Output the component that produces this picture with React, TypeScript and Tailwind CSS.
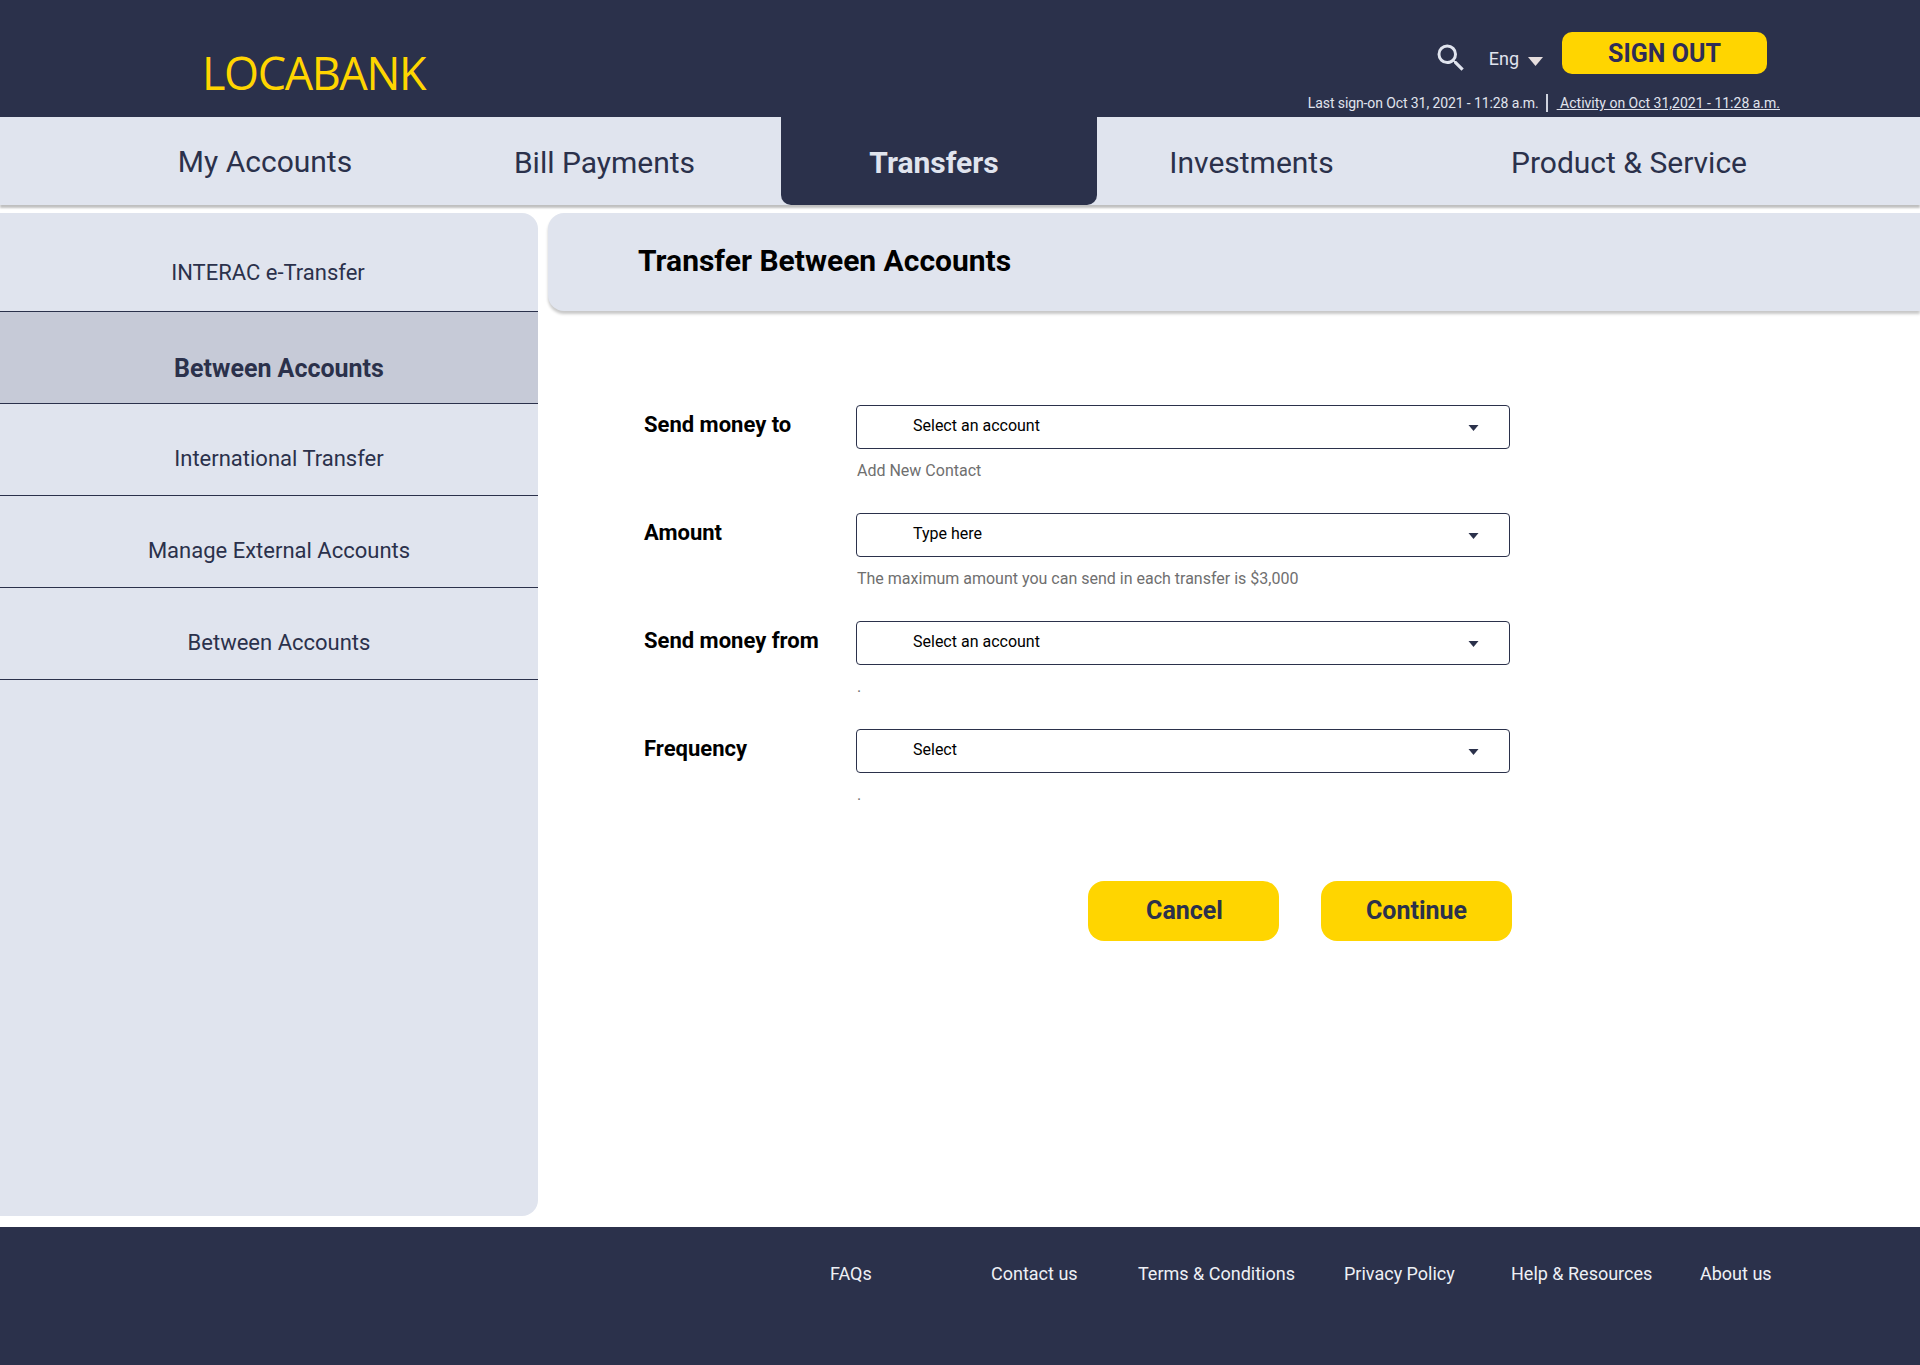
import { MdSearch } from "react-icons/md";

const navItems = [
    { label: "My Accounts", width: "ml-[100px] w-[330px]" },
    { label: "Bill Payments", width: "w-[351px] pt-[2px] pr-[2px]" },
    { label: "Transfers", width: "w-[316px] pt-[2px] pr-[10px]", active: true },
    { label: "Investments", width: "w-[306px] pt-[2px] pl-[3px]" },
    { label: "Product & Service", width: "w-[450px] pt-[2px] pl-[2px]" },
];

const sideItems = [
    { label: "INTERAC e-Transfer", height: "h-[99px] pt-[21px] pr-[2px]" },
    { label: "Between Accounts", height: "h-[92px] pt-[22px] pl-[20px]", active: true },
    { label: "International Transfer", height: "h-[92px] pt-[18px] pl-[20px]" },
    { label: "Manage External Accounts", height: "h-[92px] pt-[18px] pl-[20px]" },
    { label: "Between Accounts", height: "h-[92px] pt-[18px] pl-[20px]" },
];

const fields = [
    { label: "Send money to", value: "Select an account", help: "Add New Contact" },
    { label: "Amount", value: "Type here", help: "The maximum amount you can send in each transfer is $3,000" },
    { label: "Send money from", value: "Select an account", help: "." },
    { label: "Frequency", value: "Select", help: "." },
];

const footerLinks = [
    { label: "FAQs", width: "w-[161px]" },
    { label: "Contact us", width: "w-[147px]" },
    { label: "Terms & Conditions", width: "w-[206px]" },
    { label: "Privacy Policy", width: "w-[167px]" },
    { label: "Help & Resources", width: "w-[189px]" },
    { label: "About us", width: "" },
];

function Caret({ className }: { className: string }) {
    return (
        <svg viewBox="0 0 10 6" className={className}>
            <path d="M0 0h10L5 6z" fill="currentColor" />
        </svg>
    );
}

export default function App() {
    return (
        <div className="flex h-[1365px] flex-col overflow-hidden bg-white font-['Roboto',sans-serif]">
            <header className="flex h-[117px] shrink-0 bg-[#2b314b] pl-[202px] pr-[140px]">
                <div className="pt-[45px] font-['Open_Sans',sans-serif] text-[45px] leading-[56px] tracking-[-1.4px] text-[#ffd500]">
                    LOCABANK
                </div>
                <div className="ml-auto flex flex-col items-end">
                    <div className="mr-[13px] mt-[32px] flex h-[42px] items-center">
                        <MdSearch className="mr-[20px] mt-[10px] text-[36px] text-[#e0e4ee]" />
                        <span className="mt-[10px] text-[18px] text-[#e0e4ee]">Eng</span>
                        <Caret className="ml-[9px] mr-[19px] mt-[16px] h-[9px] w-[15px] text-[#e6dede]" />
                        <button className="h-[42px] w-[205px] rounded-[10px] bg-[#ffd500] pt-[2px] text-[25px] font-bold text-[#2e2c58]">
                            SIGN OUT
                        </button>
                    </div>
                    <div className="mt-[20px] flex items-center text-[14px] leading-[18px] text-[#e0e4ee]">
                        <span className="tracking-[-0.1px]">Last sign-on Oct 31, 2021 - 11:28 a.m.</span>
                        <span className="ml-[7px] mr-[9px] h-[18px] w-[2px] bg-[#cfd3df]" />
                        <span className="underline">&nbsp;Activity on Oct 31,2021 - 11:28 a.m.</span>
                    </div>
                </div>
            </header>

            <nav className="relative flex h-[88px] shrink-0 bg-[#e0e4ee] shadow-[0_3px_2px_rgba(0,0,0,0.25)]">
                {navItems.map((item) => (
                    <div
                        key={item.label}
                        className={
                            item.active
                                ? `flex items-center justify-center rounded-b-[10px] bg-[#2b314b] text-[30px] font-bold text-[#e0e4ee] ${item.width}`
                                : `flex items-center justify-center text-[30px] text-[#2b314b] ${item.width}`
                        }
                    >
                        {item.label}
                    </div>
                ))}
            </nav>

            <main className="flex h-[1011px] shrink-0 pt-[8px]">
                <aside className="h-[1003px] w-[538px] shrink-0 rounded-r-[16px] bg-[#e0e4ee]">
                    {sideItems.map((item, i) => (
                        <div
                            key={i}
                            className={
                                item.active
                                    ? `flex items-center justify-center border-b border-[#2b314b] bg-[#c6cad7] text-[25px] font-bold text-[#2b314b] ${item.height}`
                                    : `flex items-center justify-center border-b border-[#2b314b] text-[22px] text-[#2b314b] ${item.height}`
                            }
                        >
                            {item.label}
                        </div>
                    ))}
                </aside>

                <section className="ml-[10px] flex-1">
                    <div className="flex h-[98px] items-center rounded-l-[16px] bg-[#e0e4ee] pb-[4px] pl-[90px] shadow-[0_3px_3px_rgba(0,0,0,0.22)]">
                        <h1 className="text-[30px] font-bold text-black">Transfer Between Accounts</h1>
                    </div>

                    <div className="ml-[96px] mt-[94px] w-[868px]">
                        {fields.map((field) => (
                            <div key={field.label} className="mb-[20px] flex h-[88px]">
                                <label className="w-[212px] pt-[6px] text-[22px] font-bold leading-[28px] text-black">{field.label}</label>
                                <div className="w-[654px]">
                                    <div className="flex h-[44px] items-center rounded-[4px] border border-[#2b314b] pl-[56px] pr-[30px] text-[16px] text-black">
                                        <span className="-mt-[3px]">{field.value}</span>
                                        <Caret className="ml-auto mt-[1px] h-[6px] w-[11px] text-[#2b314b]" />
                                    </div>
                                    <p className="mt-[12px] pl-[1px] text-[16px] leading-[20px] text-[#6f6f6f]">{field.help}</p>
                                </div>
                            </div>
                        ))}
                        <div className="mt-[64px] flex justify-end gap-[42px]">
                            <button className="h-[60px] w-[191px] rounded-[16px] bg-[#ffd500] pl-[2px] text-[25px] font-bold text-[#2b314b]">Cancel</button>
                            <button className="h-[60px] w-[191px] rounded-[16px] bg-[#ffd500] text-[25px] font-bold text-[#2b314b]">Continue</button>
                        </div>
                    </div>
                </section>
            </main>

            <footer className="mt-[11px] flex flex-1 bg-[#2b314b] pl-[830px] pt-[35px] text-[18px] leading-[24px] text-[#eef0f5]">
                {footerLinks.map((link) => (
                    <span key={link.label} className={link.width}>
                        {link.label}
                    </span>
                ))}
            </footer>
        </div>
    );
}
